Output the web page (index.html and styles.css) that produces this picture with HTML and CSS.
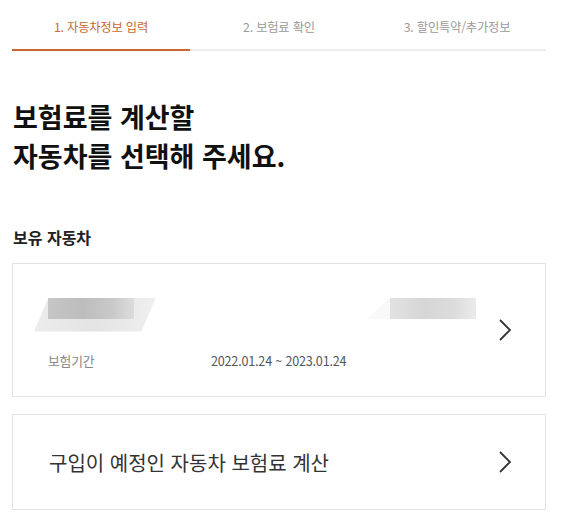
FILE: index.html
```html
<!DOCTYPE html>
<html lang="ko">
<head>
<meta charset="utf-8">
<title>자동차 보험료 계산</title>
<link rel="stylesheet" href="styles.css">
</head>
<body>
<div class="page">
  <nav class="tabs">
    <div class="tab active">1. 자동차정보 입력</div>
    <div class="tab">2. 보험료 확인</div>
    <div class="tab">3. 할인특약/추가정보</div>
  </nav>

  <h1 class="title">보험료를 계산할<br>자동차를 선택해 주세요.</h1>

  <h2 class="section-label">보유 자동차</h2>

  <div class="card card-car">
    <div class="car-info">
      <div class="blur-row">
        <div class="blur blur-left"></div>
        <div class="blur blur-right"></div>
      </div>
      <div class="info-row">
        <span class="info-key">보험기간</span>
        <span class="info-value">2022.01.24 ~ 2023.01.24</span>
      </div>
    </div>
    <svg class="chevron" width="14" height="24" viewBox="0 0 14 24"><path d="M2 2 L12 12 L2 22" fill="none" stroke="#333" stroke-width="1.8"/></svg>
  </div>

  <div class="card card-new">
    <span class="new-text">구입이 예정인 자동차 보험료 계산</span>
    <svg class="chevron" width="14" height="24" viewBox="0 0 14 24"><path d="M2 2 L12 12 L2 22" fill="none" stroke="#333" stroke-width="1.8"/></svg>
  </div>
</div>
</body>
</html>
```

FILE: styles.css
```css
html, body {
  margin: 0;
  padding: 0;
  background: #fff;
}
body {
  font-family: "Noto Sans CJK KR", "Noto Sans", sans-serif;
  color: #222;
}
.page {
  padding: 0 22px 0 12px;
}
.tabs {
  display: flex;
}
.tab {
  flex: 1;
  text-align: center;
  font-size: 12.3px;
  letter-spacing: -0.2px;
  color: #9a9a9a;
  height: 49px;
  line-height: 54px;
  border-bottom: 2px solid #ececec;
  box-sizing: content-box;
}
.tab.active {
  color: #c9682f;
  border-bottom-color: #c9682f;
}
.title {
  margin: 46px 0 0 1px;
  font-size: 27px;
  line-height: 39px;
  font-weight: 700;
  letter-spacing: 0;
  color: #111;
}
.section-label {
  margin: 52px 0 0 1px;
  font-size: 16px;
  line-height: 20px;
  font-weight: 700;
  color: #222;
}
.card {
  border: 1px solid #e3e3e3;
  box-sizing: border-box;
  display: flex;
  align-items: center;
  padding: 0 33px 0 35px;
}
.card-car {
  margin-top: 16px;
  height: 134px;
}
.card-new {
  margin-top: 17px;
  height: 96px;
}
.car-info {
  flex: 1;
  margin-right: 22px;
  padding-top: 8px;
}
.blur-row {
  display: flex;
  justify-content: space-between;
  height: 34px;
}
.blur {
  height: 34px;
  background-repeat: no-repeat;
}
.blur-left {
  width: 122px;
  margin-left: -14px;
  clip-path: polygon(12% 0, 100% 0, 88% 100%, 0 100%);
  background-image:
    linear-gradient(90deg, #c6c6c6, #bdbdbd 40%, #c9c9c9 75%, #dcdcdc),
    linear-gradient(90deg, #ececec, #e4e4e4 50%, #efefef);
  background-size: 86px 21px, 122px 34px;
  background-position: 14px 0, 0 0;
}
.blur-right {
  width: 110px;
  clip-path: polygon(22% 0, 100% 0, 100% 64%, 0 64%);
  background-image:
    linear-gradient(90deg, #e2e2e2, #d6d6d6 40%, #dcdcdc 75%, #ebebeb),
    linear-gradient(90deg, #fafafa, #f1f1f1);
  background-size: 86px 21px, 110px 34px;
  background-position: 24px 0, 0 0;
}
.info-row {
  display: flex;
  align-items: center;
  margin-top: 19px;
  line-height: 20px;
  letter-spacing: -0.2px;
}
.info-key {
  width: 163px;
  font-size: 12.8px;
  color: #888;
}
.info-value {
  font-size: 12.6px;
  color: #555;
}
.chevron {
  flex: none;
  display: block;
}
.new-text {
  flex: 1;
  font-size: 20px;
  letter-spacing: 0;
  color: #333;
  padding-left: 1px;
}
```
